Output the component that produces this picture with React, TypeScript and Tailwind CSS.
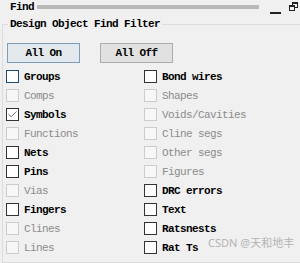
import { Check } from "lucide-react";

type Item = { label: string; on?: boolean; checked?: boolean; focus?: boolean };

const left: Item[] = [
  { label: "Groups", on: true, focus: true },
  { label: "Comps" },
  { label: "Symbols", on: true, checked: true },
  { label: "Functions" },
  { label: "Nets", on: true },
  { label: "Pins", on: true },
  { label: "Vias" },
  { label: "Fingers", on: true },
  { label: "Clines" },
  { label: "Lines" },
];

const right: Item[] = [
  { label: "Bond wires", on: true },
  { label: "Shapes" },
  { label: "Voids/Cavities" },
  { label: "Cline segs" },
  { label: "Other segs" },
  { label: "Figures" },
  { label: "DRC errors", on: true },
  { label: "Text", on: true },
  { label: "Ratsnests", on: true },
  { label: "Rat Ts", on: true },
];

const Box = ({ item }: { item: Item }) => (
  <div
    className={
      "w-[13px] h-[13px] shrink-0 flex items-center justify-center border " +
      (item.focus
        ? "border-[#1f4a72] bg-white"
        : item.on
          ? "border-[#333333] bg-white"
          : "border-[#cccccc] bg-[#f7f7f7]")
    }
  >
    {item.checked && <Check size={11} strokeWidth={1.6} className="text-[#333333]" />}
  </div>
);

const Row = ({ item }: { item: Item }) => (
  <div className="h-[19px] flex items-center gap-[5px]">
    <Box item={item} />
    <span className={item.on ? "text-black font-bold" : "text-[#8c8c8c]"}>{item.label}</span>
  </div>
);

const RestoreIcon = () => (
  <svg width="9" height="9" viewBox="0 0 9 9" shapeRendering="crispEdges">
    <rect x="3.5" y="0.5" width="5" height="5" fill="none" stroke="#222" />
    <rect x="3" y="0" width="6" height="2" fill="#222" />
    <rect x="0" y="3" width="6" height="6" fill="#f0f0f0" />
    <rect x="0.5" y="3.5" width="5" height="5" fill="none" stroke="#222" />
    <rect x="0" y="3" width="6" height="2" fill="#222" />
  </svg>
);

export default function App() {
  return (
    <div className="relative w-[300px] h-[263px] overflow-hidden bg-[#f0f0f0] text-[11px] leading-[12px] tracking-[-0.6px] font-['Liberation_Mono',monospace] text-black">
      <div className="h-[14px] flex items-center pl-[10px]">
        <span className="font-bold">Find</span>
        <div className="ml-[3px] w-[222px] h-[4px] bg-[#b9b9b9]" />
        <div className="ml-[11px] mt-[11px] w-[11px] h-[2px] bg-[#222]" />
        <div className="ml-[8px] mt-[-1px]">
          <RestoreIcon />
        </div>
      </div>

      <fieldset className="mt-[4px] ml-[2px] h-[245px] border border-r-0 border-[#dcdcdc] pl-[4px]">
        <legend className="ml-[1px] px-[2px] font-bold">Design Object Find Filter</legend>

        <div className="flex gap-[20px] mt-[13px]">
          <button className="w-[73px] h-[20px] border border-[#7a9dbc] bg-[#e3e8ec] font-bold">All On</button>
          <button className="w-[73px] h-[20px] border border-[#adadad] bg-[#e1e1e1] font-bold">All Off</button>
        </div>

        <div className="mt-[4px] -ml-[1px] grid grid-cols-[138px_1fr]">
          <div className="flex flex-col">
            {left.map((it) => (
              <Row key={it.label} item={it} />
            ))}
          </div>
          <div className="flex flex-col">
            {right.map((it) => (
              <Row key={it.label} item={it} />
            ))}
          </div>
        </div>
      </fieldset>

      <div className="absolute left-[208px] top-[237px] text-[11px] tracking-normal text-[#b4b4b4] font-['Noto_Sans','Noto_Sans_CJK_SC',sans-serif]">
        CSDN @天和地丰
      </div>
    </div>
  );
}
